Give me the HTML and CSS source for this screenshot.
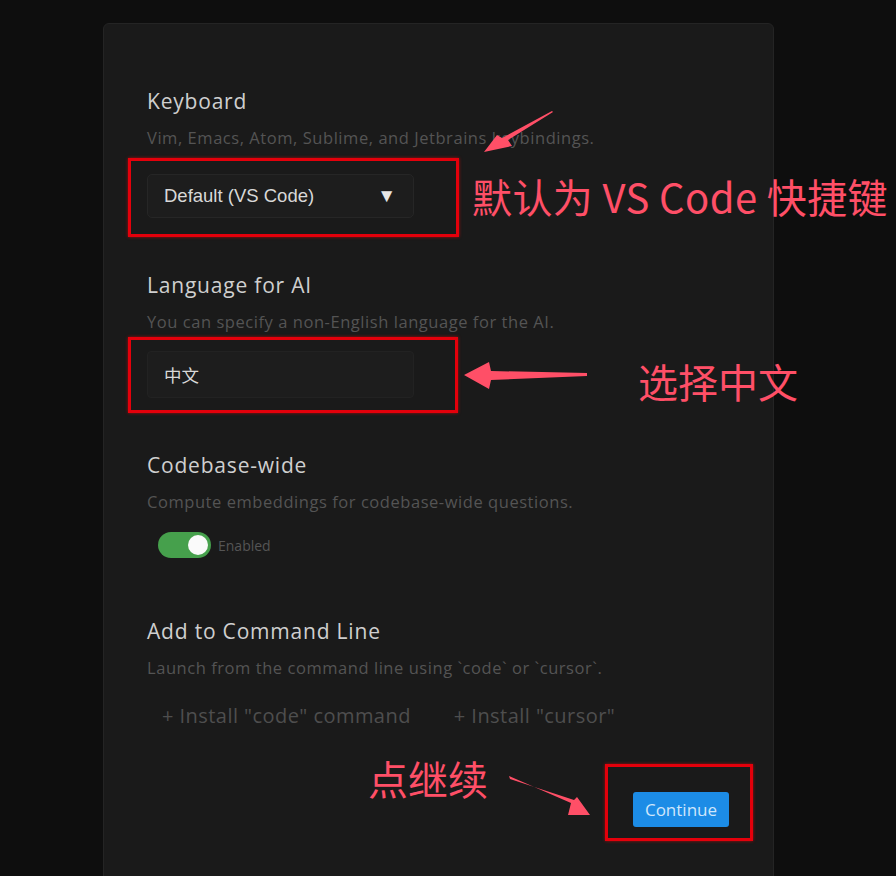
FILE: index.html
```html
<!DOCTYPE html>
<html lang="en">
<head>
<meta charset="utf-8">
<link rel="stylesheet" href="styles.css">
</head>
<body>
<div class="page">
  <div class="panel">
    <section class="sec sec-kb">
      <h2 class="title">Keyboard</h2>
      <p class="desc">Vim, Emacs, Atom, Sublime, and Jetbrains keybindings.</p>
      <div class="select">
        <span class="select-text">Default (VS Code)</span>
        <span class="select-arrow">▼</span>
      </div>
    </section>
    <section class="sec sec-lang">
      <h2 class="title">Language for AI</h2>
      <p class="desc">You can specify a non-English language for the AI.</p>
      <div class="input">中文</div>
    </section>
    <section class="sec sec-code">
      <h2 class="title">Codebase-wide</h2>
      <p class="desc">Compute embeddings for codebase-wide questions.</p>
      <div class="toggle-row">
        <span class="toggle"><span class="knob"></span></span>
        <span class="toggle-label">Enabled</span>
      </div>
    </section>
    <section class="sec sec-cli">
      <h2 class="title">Add to Command Line</h2>
      <p class="desc">Launch from the command line using `code` or `cursor`.</p>
      <div class="cli-row">
        <span class="cli-btn">+ Install "code" command</span>
        <span class="cli-btn">+ Install "cursor"</span>
      </div>
    </section>
    <div class="footer">
      <button class="continue">Continue</button>
    </div>
  </div>

  <div class="note note-kb">默认为 VS Code 快捷键</div>
  <div class="note note-lang">选择中文</div>
  <div class="note note-cont">点继续</div>

  <div class="redbox box-kb"></div>
  <div class="redbox box-lang"></div>
  <div class="redbox box-cont"></div>

  <svg class="arrows" width="896" height="876" viewBox="0 0 896 876">
    <polygon fill="#ff4f67" points="553,112 508,140 512,146 484,152 497,135 502,138 552,111"/>
    <polygon fill="#ff4f67" points="587,373 491,371 489,362 464,375 489,389 491,380 587,376"/>
    <polygon fill="#ff4f67" points="509,776 571,803 568,815 590,815 577,797 574,800 510,779"/>
  </svg>
</div>
</body>
</html>
```

FILE: styles.css
```css
* { box-sizing: border-box; }
html, body { margin: 0; padding: 0; }
body {
  background: #0e0e0e;
  font-family: "Open Sans", "Noto Sans CJK SC", sans-serif;
  overflow: hidden;
}
.page {
  position: relative;
  width: 896px;
  height: 876px;
  padding: 23px 0 0 103px;
}
.panel {
  width: 671px;
  height: 880px;
  background: #1a1a1a;
  border: 1px solid #242424;
  border-radius: 6px;
  padding: 63px 44px 0 43px;
}
.sec { display: flex; flex-direction: column; align-items: flex-start; }
.title {
  margin: 0;
  font-weight: 400;
  font-size: 21px;
  letter-spacing: 0.8px;
  line-height: 28px;
  color: #cfcfcf;
}
.desc {
  margin: 12px 0 0;
  font-size: 16.5px;
  letter-spacing: 0.55px;
  line-height: 22px;
  color: #545454;
}
.select {
  margin-top: 25px;
  width: 267px;
  height: 44px;
  border: 1px solid #262626;
  border-radius: 5px;
  background: #1d1d1d;
  display: flex;
  align-items: center;
  justify-content: space-between;
  padding: 0 17px 0 16px;
  font-family: "Liberation Sans", Arial, sans-serif;
  color: #d8d8d8;
}
.select-text { font-size: 18.5px; }
.select-arrow { font-size: 19px; color: #e6e6e6; }
.sec-lang { margin-top: 53px; }
.input {
  margin-top: 18px;
  width: 267px;
  height: 47px;
  border: 1px solid #222;
  border-radius: 4px;
  background: #1d1d1d;
  display: flex;
  align-items: center;
  padding-left: 16px;
  font-family: "Noto Sans CJK SC", sans-serif;
  font-size: 17.5px;
  color: #d8d8d8;
}
.sec-code { margin-top: 53px; }
.toggle-row {
  margin-top: 19px;
  margin-left: 11px;
  display: flex;
  align-items: center;
  gap: 7px;
}
.toggle {
  width: 53px;
  height: 26px;
  border-radius: 13px;
  background: #46a04c;
  display: flex;
  align-items: center;
  justify-content: flex-end;
  padding-right: 3px;
}
.knob {
  width: 20px;
  height: 20px;
  border-radius: 50%;
  background: #fafafa;
}
.toggle-label { font-size: 14px; color: #555; }
.sec-cli { margin-top: 59px; }
.cli-row {
  margin-top: 23px;
  margin-left: 15px;
  display: flex;
  gap: 43px;
}
.cli-btn {
  font-size: 20px;
  letter-spacing: 0.45px;
  line-height: 28px;
  color: #4e4e4e;
}
.footer {
  display: flex;
  justify-content: flex-end;
  margin-top: 62px;
}
.continue {
  width: 96px;
  height: 35px;
  border: none;
  border-radius: 3px;
  background: #1c8ce6;
  color: #cfe6fb;
  font-family: "Open Sans", sans-serif;
  font-size: 17px;
  padding: 0;
}
.note {
  position: absolute;
  font-family: "Noto Sans CJK SC", sans-serif;
  color: #ff4f67;
  font-size: 40px;
  line-height: 44px;
  white-space: nowrap;
}
.note-kb { left: 472px; top: 174px; letter-spacing: 0.4px; }
.note-lang { left: 638px; top: 359px; }
.note-cont { left: 368px; top: 756px; }
.redbox {
  position: absolute;
  border: 3px solid #e4000b;
  box-shadow: 0 0 3px rgba(255, 0, 0, 0.6);
}
.box-kb { left: 128px; top: 158px; width: 331px; height: 79px; }
.box-lang { left: 128px; top: 337px; width: 330px; height: 76px; }
.box-cont { left: 605px; top: 764px; width: 148px; height: 77px; }
.arrows { position: absolute; left: 0; top: 0; pointer-events: none; }
```
